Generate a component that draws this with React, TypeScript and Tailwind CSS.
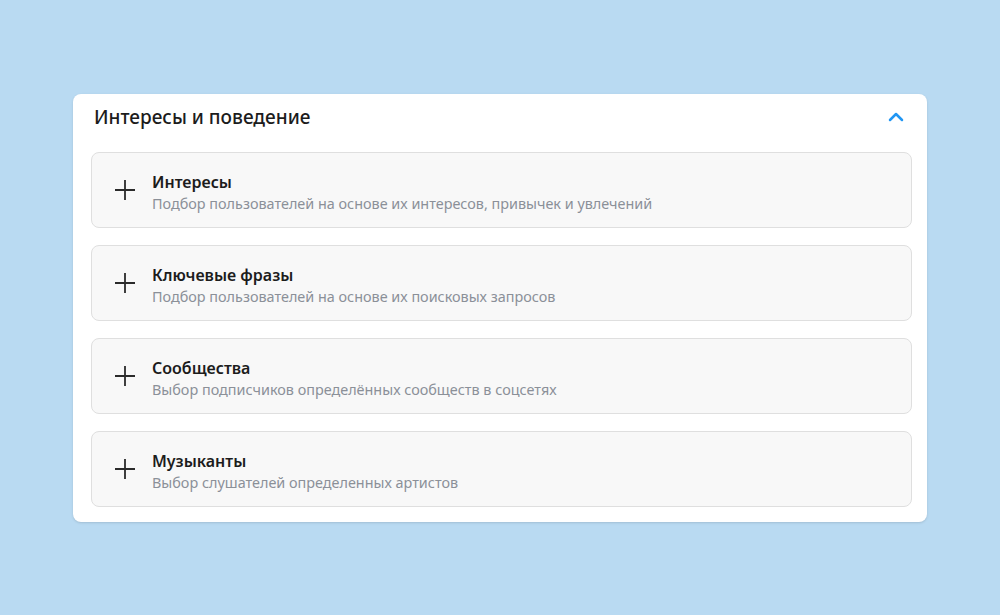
import { ChevronUp } from "lucide-react";

interface Item {
    title: string;
    description: string;
}

const items: Item[] = [
    { title: "Интересы", description: "Подбор пользователей на основе их интересов, привычек и увлечений" },
    { title: "Ключевые фразы", description: "Подбор пользователей на основе их поисковых запросов" },
    { title: "Сообщества", description: "Выбор подписчиков определённых сообществ в соцсетях" },
    { title: "Музыканты", description: "Выбор слушателей определенных артистов" },
];

function PlusIcon() {
    return (
        <svg width="22" height="22" viewBox="0 0 22 22" fill="none" stroke="#2b2b2b" strokeWidth="1.8">
            <path d="M11 1v20M1 11h20" />
        </svg>
    );
}

function OptionCard(params: Item) {
    return (
        <div className="flex items-center h-[76px] pl-[22px] pr-4 bg-[#f8f8f8] border border-[#dfdfdf] rounded-lg cursor-pointer">
            <PlusIcon />
            <div className="flex flex-col ml-[16px] pt-[5px]">
                <p className="text-[16px] leading-[22px] font-semibold text-[#1c1c1c]">{params.title}</p>
                <p className="text-[14.4px] leading-[21px] text-[#8b9098]">{params.description}</p>
            </div>
        </div>
    );
}

export default function App() {
    return (
        <div
            className="w-full h-[615px] bg-[#b9daf2] pt-[94px] pl-[73px]"
            style={{ fontFamily: '"Noto Sans", "Open Sans", sans-serif' }}
        >
            <div className="w-[854px] bg-white rounded-lg pl-[18px] pr-[15px] pb-[15px] shadow-sm">
                <div className="flex items-center justify-between h-[46px] pl-[3px] pr-[4px]">
                    <h2 className="text-[19px] font-medium text-[#1c1c1c]">Интересы и поведение</h2>
                    <ChevronUp size={24} strokeWidth={2.5} className="text-[#2196f3]" />
                </div>
                <div className="flex flex-col gap-[17px] mt-[12px]">
                    {items.map((item) => (
                        <OptionCard key={item.title} title={item.title} description={item.description} />
                    ))}
                </div>
            </div>
        </div>
    );
}
